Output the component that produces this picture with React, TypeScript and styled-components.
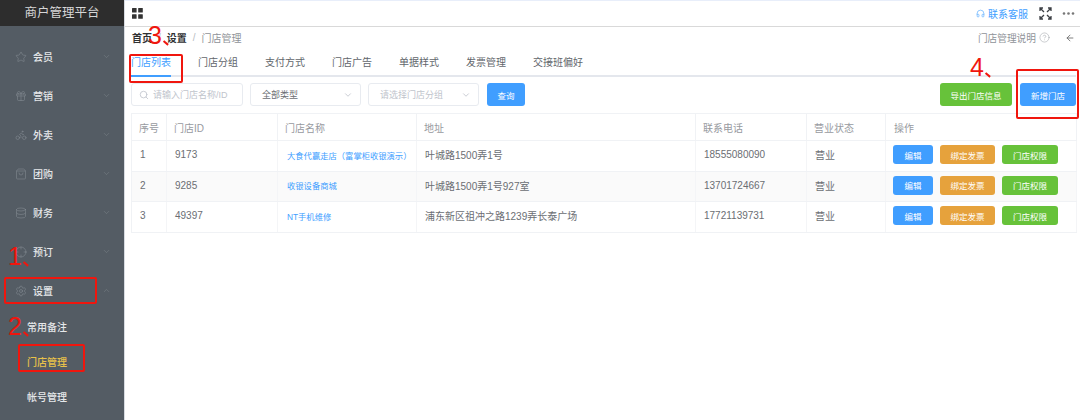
import * as React from 'react'
import styled, { createGlobalStyle } from 'styled-components'
import {
  ArrowLeft, Bike, ChevronDown, ChevronUp, CircleHelp, Crosshair, Database, Gift,
  Headphones, Search, Settings, ShoppingBag, Star
} from 'lucide-react'

const GlobalStyle = createGlobalStyle`
  html, body {
    margin: 0;
    height: 420px;
    overflow: hidden;
    background: #fff;
    font-family: "Liberation Sans", "Noto Sans CJK SC", sans-serif;
  }
`

const Page = styled.div`
  display: flex;
  height: 420px;
  width: 1080px;
  position: relative;
  overflow: hidden;
`

const Sidebar = styled.aside`
  width: 124px;
  flex: none;
  background: #545c64;
  border-right: 1px solid #d8dce2;
`

const Brand = styled.div`
  height: 26px;
  background: #2d2d2d;
  color: #d6d6d6;
  font-size: 12.5px;
  line-height: 26px;
  text-align: center;
`

const Menu = styled.nav`
  padding-top: 11px;
`

const MenuRow = styled.div`
  height: 39px;
  display: flex;
  align-items: center;
  padding: 0 13px 0 15px;
  color: #e6e8ea;
  font-size: 10px;
  font-weight: 500;
  svg { color: #868d94; flex: none; }
`

const MenuLabel = styled.span`
  margin-left: 6px;
  flex: 1;
`

const SubRow = styled.div<{ $active?: boolean }>`
  height: 35px;
  line-height: 35px;
  padding-left: 27px;
  font-size: 10px;
  font-weight: 500;
  color: ${({ $active }) => $active ? '#e8c14a' : '#e6e8ea'};
`

const Main = styled.main`
  flex: 1;
  min-width: 0;
`

const TopBar = styled.header`
  height: 25px;
  display: flex;
  align-items: center;
  padding: 0 5px 0 7px;
  border-top: 1px solid #e8eefa;
  border-bottom: 1px solid #d9d9d9;
  box-sizing: content-box;
  svg { flex: none; }
`

const Service = styled.a`
  margin-left: auto;
  display: flex;
  align-items: center;
  gap: 3px;
  color: #409eff;
  font-size: 10px;
`

const TopIcon = styled.span<{ $gap: number }>`
  display: flex;
  margin-left: ${({ $gap }) => $gap}px;
  color: #444;
`

const Crumbs = styled.div`
  display: flex;
  align-items: center;
  height: 21px;
  padding: 0 5px 0 7px;
  font-size: 10px;
  color: #8f9399;
`

const CrumbLink = styled.span`
  color: #303133;
  font-weight: 700;
`

const CrumbSep = styled.span`
  margin: 0 6px;
  color: #b8bcc2;
`

const Help = styled.span`
  margin-left: auto;
  display: flex;
  align-items: center;
  gap: 3px;
  font-size: 9.7px;
  color: #8f9399;
`

const BackIcon = styled.span`
  display: flex;
  margin-left: 15px;
  color: #666;
`

const Tabs = styled.div`
  display: flex;
  gap: 27px;
  height: 27px;
  margin: 2px 4px 0 6px;
  border-bottom: 2px solid #e4e7ed;
  box-sizing: border-box;
`

const Tab = styled.div<{ $active?: boolean }>`
  height: 27px;
  line-height: 25px;
  box-sizing: border-box;
  font-size: 10px;
  color: ${({ $active }) => $active ? '#409eff' : '#62666c'};
  border-bottom: 2px solid ${({ $active }) => $active ? '#409eff' : 'transparent'};
`

const Toolbar = styled.div`
  display: flex;
  align-items: center;
  gap: 7px;
  height: 23px;
  margin: 6px 4px 0 6px;
`

const Field = styled.div<{ $placeholder?: boolean }>`
  width: 111px;
  height: 23px;
  box-sizing: border-box;
  border: 1px solid #e8ebf0;
  border-radius: 3px;
  display: flex;
  align-items: center;
  padding: 0 7px 0 11px;
  font-size: 9px;
  color: ${({ $placeholder }) => $placeholder ? '#c0c4cc' : '#6b6e73'};
  svg { flex: none; color: #c0c4cc; }
`

const SearchField = styled(Field)`
  width: 112px;
  padding-left: 7px;
  gap: 4px;
`

const FieldText = styled.span`
  flex: 1;
  white-space: nowrap;
`

const Button = styled.button<{ $color: string; $width: number; $height?: number; $offset?: number }>`
  width: ${({ $width }) => $width}px;
  height: ${({ $height }) => $height || 23}px;
  margin-left: ${({ $offset }) => $offset || 0}px;
  padding: 0;
  border: none;
  border-radius: 3px;
  flex: none;
  background: ${({ $color }) => $color};
  color: #fff;
  font-family: inherit;
  font-size: 8.5px;
`

const Spacer = styled.div`
  flex: 1;
`

const TableWrap = styled.div`
  position: relative;
  margin: 7px 4px 0 6px;
`

const StyledTable = styled.table`
  border-collapse: collapse;
  table-layout: fixed;
  width: 945px;
  font-size: 10px;
  color: #6b6e73;
`

const Th = styled.th`
  height: 27px;
  padding: 0 0 0 7px;
  box-sizing: border-box;
  font-weight: 400;
  text-align: left;
  color: #979aa0;
  border: 1px solid #f0f2f5;
`

const Tr = styled.tr<{ $striped?: boolean }>`
  background: ${({ $striped }) => $striped ? '#fafafa' : '#fff'};
`

const Td = styled.td`
  height: 30.5px;
  padding: 0 0 2px 8px;
  box-sizing: border-box;
  border-bottom: 1px solid #f0f2f5;
  border-right: 1px solid #f4f5f7;
  white-space: nowrap;
  overflow: hidden;
`

const IndexCell = styled(Td)`
  border-left: 1px solid #f0f2f5;
`

const StoreLink = styled.a`
  font-size: 8.3px;
  color: #409eff;
  margin-left: 1px;
`

const Actions = styled.div`
  display: flex;
  gap: 7px;
  align-items: center;
  padding-left: 7px;
`

const ActionsHead = styled(Th)`
  padding-left: 8px;
`

const OpsColumn = styled.col`
  width: 191px;
`

const OpsCell = styled(Td)`
  padding: 0 0 2px;
  box-shadow: -3px 0 4px -2px rgba(0, 0, 0, 0.08);
`

const Mark = styled.div<{ $x: number; $y: number; $w: number; $h: number }>`
  position: absolute;
  left: ${({ $x }) => $x}px;
  top: ${({ $y }) => $y}px;
  width: ${({ $w }) => $w}px;
  height: ${({ $h }) => $h}px;
  box-sizing: border-box;
  border: 2px solid #f0160e;
  border-radius: 2px;
`

const Step = styled.div<{ $x: number; $y: number }>`
  position: absolute;
  left: ${({ $x }) => $x}px;
  top: ${({ $y }) => $y}px;
  color: #f0160e;
  font-size: 25px;
  line-height: 25px;
  font-family: "Liberation Sans", sans-serif;
  white-space: nowrap;
`

const Tick = styled.span`
  display: inline-block;
  width: 6px;
  height: 1.5px;
  margin-left: 1px;
  vertical-align: 1px;
  background: #f0160e;
  transform: rotate(40deg);
`

const GridIcon = () => (
  <svg width="11" height="11" viewBox="0 0 11 11" fill="#333">
    <rect x="0" y="0" width="4.6" height="4.6" rx="0.5" />
    <rect x="6.2" y="0" width="4.6" height="4.6" rx="0.5" />
    <rect x="0" y="6.2" width="4.6" height="4.6" rx="0.5" />
    <rect x="6.2" y="6.2" width="4.6" height="4.6" rx="0.5" />
  </svg>
)

const FullscreenIcon = () => (
  <svg width="13" height="13" viewBox="0 0 13 13" fill="none" stroke="#3c3f44" strokeWidth="1.3">
    <path d="M5 5 1.2 1.2M1 4V1h3M8 5l3.8-3.8M9 1h3v3M5 8l-3.8 3.8M1 9v3h3M8 8l3.8 3.8M12 9v3H9" />
  </svg>
)

const DotsIcon = () => (
  <svg width="13" height="13" viewBox="0 0 13 13" fill="#777">
    <circle cx="2" cy="6.5" r="1.3" />
    <circle cx="6.5" cy="6.5" r="1.3" />
    <circle cx="11" cy="6.5" r="1.3" />
  </svg>
)

const menu = [
  { label: '会员', icon: Star },
  { label: '营销', icon: Gift },
  { label: '外卖', icon: Bike },
  { label: '团购', icon: ShoppingBag },
  { label: '财务', icon: Database },
  { label: '预订', icon: Crosshair }
]

const tabs = ['门店列表', '门店分组', '支付方式', '门店广告', '单据样式', '发票管理', '交接班偏好']

const stores = [
  { id: '9173', name: '大食代赢走店（富掌柜收银演示）', address: '叶城路1500弄1号', phone: '18555080090' },
  { id: '9285', name: '收银设备商城', address: '叶城路1500弄1号927室', phone: '13701724667' },
  { id: '49397', name: 'NT手机维修', address: '浦东新区祖冲之路1239弄长泰广场', phone: '17721139731' }
]

export default function App () {
  return (
    <Page>
      <GlobalStyle />
      <Sidebar>
        <Brand>商户管理平台</Brand>
        <Menu>
          {menu.map(({ label, icon: Icon }) => (
            <MenuRow key={label}>
              <Icon size={12} strokeWidth={1.1} />
              <MenuLabel>{label}</MenuLabel>
              <ChevronDown size={9} strokeWidth={1.1} />
            </MenuRow>
          ))}
          <MenuRow>
            <Settings size={12} strokeWidth={1.1} />
            <MenuLabel>设置</MenuLabel>
            <ChevronUp size={9} strokeWidth={1.1} />
          </MenuRow>
          <SubRow>常用备注</SubRow>
          <SubRow $active>门店管理</SubRow>
          <SubRow>帐号管理</SubRow>
        </Menu>
      </Sidebar>
      <Main>
        <TopBar>
          <GridIcon />
          <Service>
            <Headphones size={9} strokeWidth={1.5} />
            联系客服
          </Service>
          <TopIcon $gap={11}><FullscreenIcon /></TopIcon>
          <TopIcon $gap={10}><DotsIcon /></TopIcon>
        </TopBar>
        <Crumbs>
          <CrumbLink>首页</CrumbLink>
          <CrumbSep>/</CrumbSep>
          <CrumbLink>设置</CrumbLink>
          <CrumbSep>/</CrumbSep>
          门店管理
          <Help>
            门店管理说明
            <CircleHelp size={11} strokeWidth={1} />
          </Help>
          <BackIcon><ArrowLeft size={10} /></BackIcon>
        </Crumbs>
        <Tabs>
          {tabs.map((tab, i) => <Tab key={tab} $active={i === 0}>{tab}</Tab>)}
        </Tabs>
        <Toolbar>
          <SearchField $placeholder>
            <Search size={10} />
            <FieldText>请输入门店名称/ID</FieldText>
          </SearchField>
          <Field>
            <FieldText>全部类型</FieldText>
            <ChevronDown size={10} />
          </Field>
          <Field $placeholder>
            <FieldText>请选择门店分组</FieldText>
            <ChevronDown size={10} />
          </Field>
          <Button $color="#409eff" $width={38} $offset={1}>查询</Button>
          <Spacer />
          <Button $color="#67c23a" $width={72}>导出门店信息</Button>
          <Button $color="#409eff" $width={56} $offset={1}>新增门店</Button>
        </Toolbar>
        <TableWrap>
          <StyledTable>
            <colgroup>
              <col width="35" />
              <col width="111" />
              <col width="139" />
              <col width="279" />
              <col width="111" />
              <col width="79" />
              <OpsColumn />
            </colgroup>
            <thead>
              <tr>
                <Th>序号</Th>
                <Th>门店ID</Th>
                <Th>门店名称</Th>
                <Th>地址</Th>
                <Th>联系电话</Th>
                <Th>营业状态</Th>
                <ActionsHead>操作</ActionsHead>
              </tr>
            </thead>
            <tbody>
              {stores.map((store, i) => (
                <Tr key={store.id} $striped={i === 1}>
                  <IndexCell>{i + 1}</IndexCell>
                  <Td>{store.id}</Td>
                  <Td><StoreLink>{store.name}</StoreLink></Td>
                  <Td>{store.address}</Td>
                  <Td>{store.phone}</Td>
                  <Td>营业</Td>
                  <OpsCell>
                    <Actions>
                      <Button $color="#409eff" $width={40} $height={19}>编辑</Button>
                      <Button $color="#e6a23c" $width={55} $height={19}>绑定发票</Button>
                      <Button $color="#67c23a" $width={56} $height={19}>门店权限</Button>
                    </Actions>
                  </OpsCell>
                </Tr>
              ))}
            </tbody>
          </StyledTable>
        </TableWrap>
      </Main>
      <Mark $x={4} $y={277} $w={93} $h={27} />
      <Mark $x={18} $y={344} $w={67} $h={28} />
      <Mark $x={129} $y={54} $w={54} $h={29} />
      <Mark $x={1016} $y={69} $w={63} $h={50} />
      <Step $x={8} $y={244}>1<Tick /></Step>
      <Step $x={8} $y={314}>2<Tick /></Step>
      <Step $x={148} $y={23}>3<Tick /></Step>
      <Step $x={970} $y={55}>4<Tick /></Step>
    </Page>
  )
}
